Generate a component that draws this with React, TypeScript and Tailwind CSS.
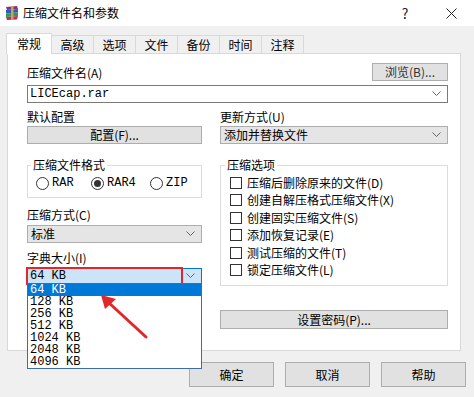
import { useState } from 'react';

const mono = "font-['Liberation_Mono',monospace]";

const Chevron = () => (
  <svg width="9" height="6" viewBox="0 0 9 6" className="shrink-0">
    <polyline points="0.5,0.5 4.5,4.5 8.5,0.5" fill="none" stroke="#666" strokeWidth="1" />
  </svg>
);

const Radio = ({ label, checked, w }: { label: string; checked?: boolean; w: string }) => (
  <div className={`flex items-center ${w}`}>
    <span className="w-[13px] h-[13px] rounded-full border border-[#333] bg-white flex items-center justify-center">
      {checked && <span className="w-[7px] h-[7px] rounded-full bg-[#333]" />}
    </span>
    <span className={`ml-[3px] ${mono}`}>{label}</span>
  </div>
);

const Check = ({ label }: { label: string }) => (
  <div className="flex items-center h-[17.5px]">
    <span className="w-[12px] h-[12px] border border-[#333] bg-white" />
    <span className="ml-[5px]">{label}</span>
  </div>
);

const Button = ({ children, className = '' }: { children: React.ReactNode; className?: string }) => (
  <div className={`flex items-center justify-center bg-[#e1e1e1] border border-[#adadad] ${className}`}>
    {children}
  </div>
);

const tabs = ['常规', '高级', '选项', '文件', '备份', '时间', '注释'];
const sizes = ['64 KB', '128 KB', '256 KB', '512 KB', '1024 KB', '2048 KB', '4096 KB'];

export default function App() {
  const [tab] = useState(0);

  return (
    <div className="w-[474px] h-[397px] bg-[#f0f0f0] relative overflow-hidden text-[12px] leading-[14px] text-black font-['Noto_Sans_CJK_SC',sans-serif]">
      {/* Title bar */}
      <div className="h-[26px] bg-white flex items-center pl-[4px]">
        <svg width="16" height="16" viewBox="0 0 16 16">
          <path d="M2 2 L13 1 L14 4 L3 5 Z" fill="#8e2f7d" />
          <path d="M2 5 L14 4 L14 7.5 L2 8.5 Z" fill="#2c5fb7" />
          <path d="M2 8.5 L14 7.5 L14 11 L2 12 Z" fill="#2f9a4a" />
          <path d="M2 12 L14 11 L13 14.5 L3 15 Z" fill="#b8325a" />
          <rect x="7" y="1" width="2.5" height="14" fill="#c9a35a" />
        </svg>
        <span className="ml-[3px]">压缩文件名和参数</span>
        <div className="ml-auto flex h-full">
          <div className="w-[46px] flex items-center justify-center text-[14px] text-[#222]">?</div>
          <div className="w-[46px] flex items-center justify-center">
            <svg width="11" height="11" viewBox="0 0 11 11">
              <path d="M0.5 0.5 L10.5 10.5 M10.5 0.5 L0.5 10.5" stroke="#222" strokeWidth="1" />
            </svg>
          </div>
        </div>
      </div>

      {/* Tabs */}
      <div className="mt-[7px] ml-[6px] flex items-end h-[20px] relative z-10">
        {tabs.map((t, i) =>
          i === tab ? (
            <div key={t} className="w-[46px] h-[21px] -mb-px bg-white border border-[#d9d9d9] border-b-0 flex items-center justify-center">
              {t}
            </div>
          ) : (
            <div key={t} className="w-[42px] h-[18px] pt-[1px] bg-[#f0f0f0] border border-[#d9d9d9] border-l-0 border-b-0 flex items-center justify-center">
              {t}
            </div>
          )
        )}
      </div>

      {/* Panel */}
      <div className="ml-[7px] w-[454px] h-[298px] bg-white border border-[#d9d9d9] pl-[19px] pr-[12px] pt-[9px]">
        <div className="flex items-center justify-between h-[18px]">
          <span className="mt-[2px]">压缩文件名(A)</span>
          <Button className="w-[76px] h-[18px] text-[#333]">浏览(B)...</Button>
        </div>
        <div className="mt-[4px] h-[18px] border border-[#7a7a7a] flex items-center pl-[2px] pr-[6px]">
          <span className={`flex-1 ${mono}`}>LICEcap.rar</span>
          <Chevron />
        </div>

        <div className="mt-[6px] grid grid-cols-[175px_228px] gap-x-[18px]">
          {/* Left column */}
          <div className="flex flex-col">
            <span className="h-[16px] leading-[16px]">默认配置</span>
            <Button className="mt-[1px] h-[18px]">配置(F)...</Button>

            <fieldset className="mt-[14px] border border-[#dcdcdc] pl-[8px] pb-[7px]">
              <legend className="-ml-[5px] px-[2px] leading-[14px]">压缩文件格式</legend>
              <div className="mt-[4px] flex items-center h-[14px]">
                <Radio label="RAR" w="w-[55px]" />
                <Radio label="RAR4" checked w="w-[59px]" />
                <Radio label="ZIP" w="w-[50px]" />
              </div>
            </fieldset>

            <span className="mt-[9px] h-[16px] leading-[16px]">压缩方式(C)</span>
            <div className="mt-[2px] h-[18px] bg-[#e5e5e5] border border-[#adadad] flex items-center pl-[3px] pr-[6px]">
              <span className="flex-1">标准</span>
              <Chevron />
            </div>

            <span className="mt-[7px] h-[16px] leading-[16px]">字典大小(I)</span>
            <div className="mt-[2px] h-[16px] bg-[#cce4f7] border border-[#0078d7] flex items-center pl-[2px] pr-[6px] relative z-20">
              <span className={`flex-1 ${mono}`}>64 KB</span>
              <Chevron />
              <div className="absolute left-[-2px] top-[-2px] w-[157px] h-[18px] border-2 border-[#e3262b]" />
              <div className="absolute left-[-1px] top-full w-[175px] bg-white border border-[#3b6ea5]">
                {sizes.map((s, i) => (
                  <div
                    key={s}
                    className={`h-[12px] leading-[12px] pl-[2px] ${mono} ${i === 0 ? 'bg-[#0078d7] text-white' : ''}`}
                  >
                    {s}
                  </div>
                ))}
              </div>
            </div>
          </div>

          {/* Right column */}
          <div className="flex flex-col">
            <span className="h-[16px] leading-[16px]">更新方式(U)</span>
            <div className="mt-[1px] h-[18px] bg-[#e5e5e5] border border-[#adadad] flex items-center pl-[3px] pr-[6px]">
              <span className="flex-1">添加并替换文件</span>
              <Chevron />
            </div>

            <fieldset className="mt-[14px] border border-[#dcdcdc] pl-[9px] pb-[6px]">
              <legend className="-ml-[5px] px-[2px] leading-[14px]">压缩选项</legend>
              <div className="mt-[2px] flex flex-col">
                <Check label="压缩后删除原来的文件(D)" />
                <Check label="创建自解压格式压缩文件(X)" />
                <Check label="创建固实压缩文件(S)" />
                <Check label="添加恢复记录(E)" />
                <Check label="测试压缩的文件(T)" />
                <Check label="锁定压缩文件(L)" />
              </div>
            </fieldset>

            <Button className="mt-[24px] h-[19px]">设置密码(P)...</Button>
          </div>
        </div>
      </div>

      {/* Bottom buttons */}
      <div className="mt-[11px] flex justify-end gap-[11px] pr-[8px]">
        <Button className="w-[85px] h-[25px] border-[#0078d7]">确定</Button>
        <Button className="w-[85px] h-[25px]">取消</Button>
        <Button className="w-[85px] h-[25px]">帮助</Button>
      </div>

      {/* Red annotation arrow */}
      <svg className="absolute left-0 top-0 z-30 pointer-events-none" width="474" height="397">
        <line x1="146" y1="337" x2="108" y2="302" stroke="#e3262b" strokeWidth="3" strokeLinecap="round" />
        <path d="M101 295 L116 299 L105 309 Z" fill="#e3262b" />
      </svg>
    </div>
  );
}
